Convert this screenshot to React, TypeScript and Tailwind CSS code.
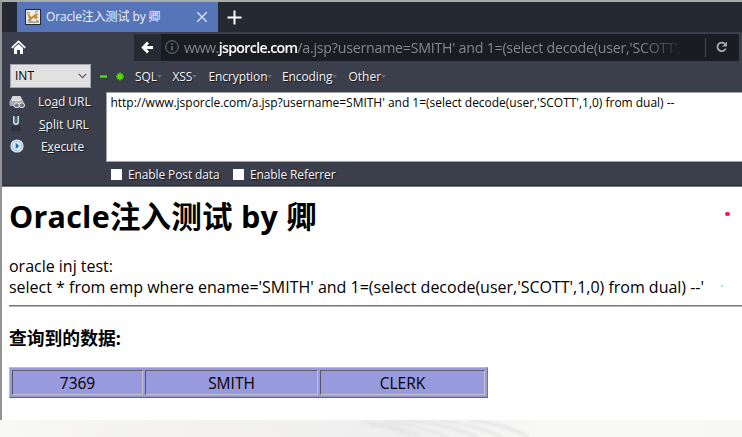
import React from "react";

const sans = "font-['Open_Sans','Noto_Sans_CJK_SC',sans-serif]";

const menus = [
  { label: "SQL", width: "w-[37.5px]", tracking: "tracking-[-0.1px]" },
  { label: "XSS", width: "w-[36px]", tracking: "tracking-[-0.1px]" },
  { label: "Encryption", width: "w-[73.5px]", tracking: "tracking-[-0.1px]" },
  { label: "Encoding", width: "w-[66.5px]", tracking: "tracking-[-0.1px]" },
  { label: "Other", width: "w-[50px]", tracking: "tracking-[0px]" },
];

const shade = "[text-shadow:1px_1px_1px_#15171c]";

function Favicon() {
  return (
    <svg className="h-4 w-4 shrink-0" viewBox="0 0 16 16">
      <rect x=".5" y=".5" width="15" height="15" fill="#eeece6" stroke="#24272e" />
      <path d="M2 4l2 1 2 3 3-2 2-2 2 1-1 2 1 2-2 1-3-1-2 2-4 1 2-2-1-3z" fill="#c4933f" />
      <path d="M2 13.5l4-2 3 1 5-1v2.5H2z" fill="#aaa8a2" />
      <path d="M2 3l3 1M10 3l3-1M3 12l3-1M11 11l2 1" stroke="#77736a" fill="none" strokeWidth=".8" />
    </svg>
  );
}

function TabStrip() {
  return (
    <div className="flex h-[30px] bg-[#252932] pl-[15px]">
      <div className="flex h-[30px] w-[201px] items-center bg-[#5675b9] pl-2 pr-[10px]">
        <Favicon />
        <span className="ml-[5px] flex-1 whitespace-nowrap text-[12px] leading-[18px] tracking-[-0.1px] text-[#eef2fb]">
          Oracle注入测试 by 卿
        </span>
        <svg className="h-3 w-3" viewBox="0 0 12 12" stroke="#dce4f5" strokeWidth="1.3">
          <path d="M1.3 1.3l9.4 9.4M10.7 1.3l-9.4 9.4" />
        </svg>
      </div>
      <svg className="ml-[9px] mt-2 h-[15px] w-[15px]" viewBox="0 0 15 15" stroke="#fff" strokeWidth="2">
        <path d="M7.5 .5v14M.5 7.5h14" />
      </svg>
    </div>
  );
}

function NavBar() {
  return (
    <div className="flex h-[29px] pt-[2px]">
      <svg className="ml-[9px] mt-[6px] h-[15px] w-[15px]" viewBox="0 0 15 15">
        <path d="M.8 7.8L7.5 1.4 14.2 7.8" fill="none" stroke="#fff" strokeWidth="1.8" />
        <path d="M3 8l4.5-4.1L12 8v6H9V10H6v4H3z" fill="#fff" />
      </svg>
      <div className="ml-[108px] flex h-[27px] w-[605px] rounded-[2px] bg-[#191c21]">
        <div className="flex w-[27px] items-center justify-center bg-[#252b33]">
          <svg className="h-[13px] w-[13px]" viewBox="0 0 13 13">
            <path d="M.3 6.5L6 .6 8 2.6 5.7 5H12v3H5.7L8 10.4l-2 2z" fill="#fff" />
          </svg>
        </div>
        <svg className="ml-[4px] mt-[6px] h-[14px] w-[14px]" viewBox="0 0 14 14" fill="none" stroke="#75787c">
          <circle cx="7" cy="7" r="6.3" />
          <path d="M7 6v4.5M7 3.2v1.5" strokeWidth="1.4" />
        </svg>
        <div className="ml-[5px] h-[27px] w-[506px] whitespace-nowrap text-[14.2px] leading-[27px] tracking-[-0.23px] text-[#85888c] [mask-image:linear-gradient(to_right,black_90%,transparent_99%)]">
          <span className="tracking-[-0.5px]">www.</span><span className="font-semibold tracking-[-0.68px] text-white">jsporcle.com</span>/a.jsp?username=SMITH' and 1=(select decode(user,'SCOTT',
        </div>
        <div className="ml-[15px] mt-1 h-[19px] w-px bg-[#44474c]" />
        <svg className="ml-[10px] mt-[7px] h-[12px] w-[12px]" viewBox="0 0 12 12">
          <path d="M9.8 7.5A4.3 4.3 0 1 1 8.8 2.8" fill="none" stroke="#a7a9ac" strokeWidth="1.8" />
          <path d="M11 .5V5.4H6z" fill="#a7a9ac" />
        </svg>
      </div>
    </div>
  );
}

function MenuRow() {
  return (
    <div className="flex h-[31px] items-start pl-2 pt-[3px]">
      <div className="flex h-6 w-[81px] items-center justify-between border border-[#a5a7ad] bg-[#e1e1e1] pl-1 pr-[3px] text-[12px] text-black">
        <span>INT</span>
        <svg className="h-[6px] w-[9px]" viewBox="0 0 9 6" fill="none" stroke="#5c5c5c" strokeWidth="1.2">
          <path d="M.7 .8l3.8 3.8L8.3 .8" />
        </svg>
      </div>
      <svg className="ml-[8px] mt-[7px] h-[11px] w-[26px]" viewBox="0 0 26 11" stroke="#55d90b" fill="none">
        <path d="M1 5.5h7" strokeWidth="2.4" />
        <path d="M21 1.5v8M17 5.5h8M18.4 2.9l5.2 5.2M23.6 2.9l-5.2 5.2" strokeWidth="1.6" />
      </svg>
      <div className={`ml-[10px] flex pt-[3px] text-[12px] leading-[19px] text-[#f3f3f4] ${shade}`}>
        {menus.map((menu) => (
          <div key={menu.label} className={`flex items-center ${menu.width}`}>
            <span className={menu.tracking}>{menu.label}</span>
            <svg className="h-[3px] w-[5px] shrink-0" viewBox="0 0 5 3">
              <path d="M0 0h5L2.5 3z" fill="#686c75" />
            </svg>
          </div>
        ))}
      </div>
    </div>
  );
}

function LoadIcon() {
  return (
    <svg className="h-4 w-4" viewBox="0 0 16 16">
      <path d="M3.5 2h8L14 7H1z" fill="#d3d5d7" />
      <rect x=".5" y="6" width="14" height="6" rx="1.5" fill="#a6a9ad" />
      <path d="M3 6.5h9" stroke="#e9e9ea" />
      <g fill="#74787d" stroke="#e9e9ea">
        <rect x="5" y="9" width="5.5" height="4.5" rx="2" />
        <rect x="10" y="9" width="5.5" height="4.5" rx="2" />
      </g>
    </svg>
  );
}

function SplitIcon() {
  return (
    <svg className="h-4 w-4" viewBox="0 0 16 16" fill="none">
      <path d="M5.8 0v6q0 2.2 2.2 2.2T10.2 6V0" stroke="#cce9f0" strokeWidth="1.5" />
      <path d="M8 1v6" stroke="#57899a" />
      <path d="M7 9.5L4.5 11v3.5H7v-3h2v3h2.5V11L9 9.5" stroke="#2a2f38" strokeWidth="1.5" />
    </svg>
  );
}

function ExecuteIcon() {
  return (
    <svg className="h-4 w-4" viewBox="0 0 16 16">
      <circle cx="8" cy="8" r="6.6" fill="#e8f1f9" />
      <circle cx="8" cy="8" r="5" fill="#d9eafa" stroke="#93bae0" />
      <path d="M6.7 4.8L10.2 8l-3.5 3.2z" fill="#2467ad" />
    </svg>
  );
}

function UrlEditor() {
  return (
    <div className="flex h-[70px]">
      <div className={`w-[104px] text-[12px] leading-[23px] text-[#f3f3f4] ${shade}`}>
        <div className="flex h-[20px] items-center pl-[7px]">
          <LoadIcon />
          <span className="-mt-[2px] ml-[13px] tracking-[-0.05px]">Lo<u>a</u>d URL</span>
        </div>
        <div className="flex h-[23px] items-center pl-[6px]">
          <div><SplitIcon /></div>
          <span className="ml-[15px] mt-px"><u>S</u>plit URL</span>
        </div>
        <div className="flex h-[22px] items-center pl-[7px]">
          <ExecuteIcon />
          <span className="ml-[16px] tracking-[-0.1px]">E<u>x</u>ecute</span>
        </div>
      </div>
      <div className="flex-1 overflow-hidden whitespace-nowrap border border-r-0 border-[#a1a1a6] bg-white pl-[3.5px] pt-[1px] text-[12px] leading-[18px] tracking-[-0.015px] text-black">
        http://www.jsporcle.com/a.jsp?username=SMITH' and 1=(select decode(user,'SCOTT',1,0) from dual) --
      </div>
    </div>
  );
}

function Options() {
  return (
    <div className={`flex h-[24px] items-center border-b border-[#292c37] pl-[109px] pt-[2px] text-[12px] tracking-[-0.12px] text-[#f3f3f4] ${shade}`}>
      <div className="h-[11px] w-[11px] bg-white" />
      <span className="ml-[6px] w-[105px] whitespace-nowrap">Enable Post data</span>
      <div className="h-[11px] w-[11px] bg-white" />
      <span className="ml-[6px] whitespace-nowrap">Enable Referrer</span>
    </div>
  );
}

function Page() {
  return (
    <main className="relative h-[234px] border-t border-[#777a83] bg-white pl-[7px] text-[16px] leading-[21px] text-black">
      <h1 className="whitespace-nowrap pt-[8px] text-[30.5px] font-bold leading-[42px] tracking-[0.22px]">Oracle注入测试 by 卿</h1>
      <div className="mt-[19px] whitespace-nowrap tracking-[-0.01px]">
        <p>oracle inj test:</p>
        <p>select * from emp where ename='SMITH' and 1=(select decode(user,'SCOTT',1,0) from dual) --'</p>
      </div>
      <div className="mt-[7px] h-[2px] border-b border-t border-b-[#b8b8b8] border-t-[#777]" />
      <h3 className="mt-[19px] text-[17.8px] font-bold leading-[24px]">查询到的数据:</h3>
      <div className="mt-[17px] flex h-[31px] w-[479px] gap-[2px] border border-b-[#62626c] border-l-[#bcbcc3] border-r-[#777780] border-t-[#bcbcc3] bg-[#9999dd] p-[2px] text-center text-[15.5px] leading-[24px]">
        <div className="w-[131px] border border-b-[#c5c5cb] border-l-[#555563] border-r-[#c5c5cb] border-t-[#62626f]">7369</div>
        <div className="w-[173px] border border-b-[#c5c5cb] border-l-[#555563] border-r-[#c5c5cb] border-t-[#62626f]">SMITH</div>
        <div className="flex-1 border border-b-[#c5c5cb] border-l-[#555563] border-r-[#c5c5cb] border-t-[#62626f]">CLERK</div>
      </div>
      <span className="absolute left-[723px] top-[25px] h-[4px] w-[5px] rounded-full bg-[#fb1661]" />
      <span className="absolute left-[719px] top-[98px] h-[2px] w-[2px] rounded-full bg-[#59e9a8]" />
    </main>
  );
}

export default function App() {
  return (
    <div className={`h-[437px] w-[742px] overflow-hidden bg-[#f8f8f7] ${sans}`}>
      <div className="border-l-2 border-t-2 border-l-[#939396] border-t-[#a7aba9]">
        <header className="bg-[#3b3f4c]">
          <TabStrip />
          <NavBar />
          <MenuRow />
          <UrlEditor />
          <Options />
        </header>
        <Page />
      </div>
      <svg className="block h-[17px] w-full" viewBox="0 0 742 17" preserveAspectRatio="none">
        <defs>
          <linearGradient id="mist">
            <stop stopColor="#f8f8f6" />
            <stop offset=".3" stopColor="#f2f1f0" />
            <stop offset=".55" stopColor="#efefef" />
            <stop offset=".75" stopColor="#f9f9f8" />
            <stop offset="1" stopColor="#f7f7f6" />
          </linearGradient>
          <filter id="soft"><feGaussianBlur stdDeviation="1.6" /></filter>
        </defs>
        <path d="M0 0h742v17H0z" fill="url(#mist)" />
        <g fill="none" stroke="#dedede" filter="url(#soft)">
          <path d="M362 2q36 3 58 14M382 1q38 4 66 16M405 0q42 4 72 17M440 0q37 5 62 17" strokeWidth="1.5" />
          <path d="M370 5q25 2 41 12M425 2q32 6 52 15M470 0q38 5 58 17" stroke="#e6e5e6" strokeWidth="3" />
        </g>
      </svg>
    </div>
  );
}
